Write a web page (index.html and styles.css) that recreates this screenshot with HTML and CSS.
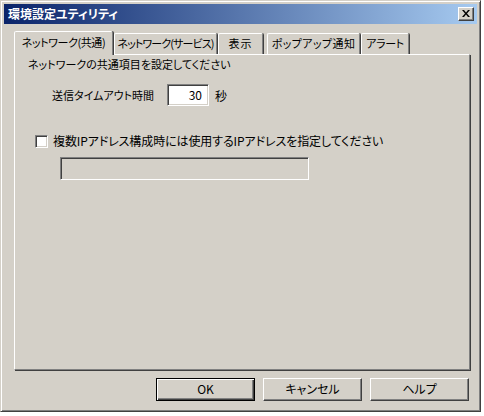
FILE: index.html
```html
<!DOCTYPE html>
<html lang="ja">
<head>
<meta charset="utf-8">
<title>環境設定ユティリティ</title>
<link rel="stylesheet" href="styles.css">
</head>
<body>
<div class="window">
  <div class="titlebar">
    <span class="title">環境設定ユティリティ</span>
    <span class="close">
      <svg width="8" height="7" viewBox="0 0 8 7"><path d="M0 0h2l2 2.5L6 0h2L5 3.5 8 7H6L4 4.5 2 7H0l3-3.5z" fill="#000"/></svg>
    </span>
  </div>
  <div class="body">
    <div class="tabs">
      <div class="tab active t1">ネットワーク(共通)</div>
      <div class="tab t2">ネットワーク(サービス)</div>
      <div class="tab t3">表示</div>
      <div class="tab t4">ポップアップ通知</div>
      <div class="tab t5">アラート</div>
    </div>
    <div class="pane">
      <div class="subtitle">ネットワークの共通項目を設定してください</div>
      <div class="timeout-row">
        <span class="label">送信タイムアウト時間</span>
        <span class="input">30</span>
        <span class="unit">秒</span>
      </div>
      <div class="check-row">
        <span class="checkbox"></span>
        <span class="check-label">複数IPアドレス構成時には使用するIPアドレスを指定してください</span>
      </div>
      <div class="input disabled"></div>
    </div>
    <div class="buttons">
      <div class="btn default">OK</div>
      <div class="btn">キャンセル</div>
      <div class="btn">ヘルプ</div>
    </div>
  </div>
</div>
</body>
</html>
```
FILE: styles.css
```css
* { box-sizing: border-box; }
body {
  margin: 0;
  background: #ffffff;
  font-family: "Noto Sans CJK JP", "Noto Sans", sans-serif;
  font-size: 11px;
  color: #000;
  font-feature-settings: "palt";
}
.window {
  width: 481px;
  height: 412px;
  background: #d4d0c8;
  border: 1px solid;
  border-color: #d4d0c8 #404040 #404040 #d4d0c8;
  box-shadow: inset 1px 1px 0 #ffffff, inset -1px -1px 0 #808080;
  padding: 3px;
  display: flex;
  flex-direction: column;
}
.titlebar {
  height: 20px;
  background: linear-gradient(to right, #0a246a, #a6caf0);
  display: flex;
  align-items: center;
  justify-content: space-between;
  padding: 0 3px 0 4px;
}
.title {
  color: #fff;
  font-weight: bold;
  font-size: 12px;
  line-height: 16px;
}
.close {
  width: 16px;
  height: 14px;
  background: #d4d0c8;
  border: 1px solid;
  border-color: #ffffff #404040 #404040 #ffffff;
  box-shadow: inset -1px -1px 0 #808080;
  display: flex;
  align-items: center;
  justify-content: center;
  padding-bottom: 1px;
}
.body {
  flex: 1;
  padding: 7px 8px 0 10px;
  display: flex;
  flex-direction: column;
}
.tabs {
  display: flex;
  align-items: flex-end;
  height: 23px;
  padding-left: 2px;
  position: relative;
  z-index: 1;
}
.tab {
  height: 21px;
  line-height: 19px;
  padding: 0 1px;
  border: 1px solid;
  border-bottom: none;
  border-color: #ffffff #808080 transparent #ffffff;
  border-radius: 2px 2px 0 0;
  box-shadow: 1px 0 0 #404040;
  margin-right: 1px;
  white-space: nowrap;
  text-align: center;
  letter-spacing: -0.4px;
  overflow: hidden;
}
.tab.active {
  height: 24px;
  margin: 0 1px -1px -2px;
  padding-top: 1px;
  background: #d4d0c8;
  position: relative;
}
.t1 { width: 99px; }
.t2 { width: 103px; letter-spacing: -0.9px; }
.t3 { width: 45px; margin-right: 4px; letter-spacing: 1px; }
.t4 { width: 93px; letter-spacing: 0.4px; }
.t5 { width: 48px; }
.pane {
  width: 456px;
  height: 316px;
  border: 1px solid;
  border-color: #ffffff #808080 #808080 #ffffff;
  box-shadow: 1px 1px 0 #404040;
  padding: 2px 13px 0 13px;
  display: flex;
  flex-direction: column;
  align-items: flex-start;
}
.subtitle {
  line-height: 14px;
}
.timeout-row {
  margin-top: 13px;
  margin-left: 24px;
  display: flex;
  align-items: center;
  height: 22px;
}
.label { width: 115px; }
.input {
  display: block;
  width: 42px;
  height: 22px;
  background: #ffffff;
  border: 1px solid;
  border-color: #808080 #ffffff #ffffff #808080;
  box-shadow: inset 1px 1px 0 #404040, inset -1px -1px 0 #d4d0c8;
  text-align: right;
  padding: 0 6px;
  line-height: 19px;
  font-size: 12px;
}
.unit { margin-left: 6px; font-size: 12px; }
.check-row {
  margin-top: 28px;
  margin-left: 7px;
  display: flex;
  align-items: center;
  height: 14px;
}
.checkbox {
  width: 13px;
  height: 13px;
  background: #ffffff;
  border: 1px solid;
  border-color: #808080 #ffffff #ffffff #808080;
  box-shadow: inset 1px 1px 0 #404040, inset -1px -1px 0 #d4d0c8;
}
.check-label { margin-left: 5px; line-height: 14px; font-size: 12px; letter-spacing: -0.1px; }
.input.disabled {
  margin-top: 9px;
  margin-left: 32px;
  width: 249px;
  height: 23px;
  background: #d4d0c8;
}
.buttons {
  margin-top: 8px;
  display: flex;
  justify-content: flex-end;
  gap: 8px;
}
.btn {
  width: 99px;
  height: 23px;
  border: 1px solid;
  border-color: #ffffff #404040 #404040 #ffffff;
  box-shadow: inset -1px -1px 0 #808080;
  text-align: center;
  line-height: 20px;
  font-size: 12px;
}
.btn.default {
  border-color: #000;
  box-shadow: inset 1px 1px 0 #ffffff, inset -1px -1px 0 #404040, inset -2px -2px 0 #808080;
}
```
